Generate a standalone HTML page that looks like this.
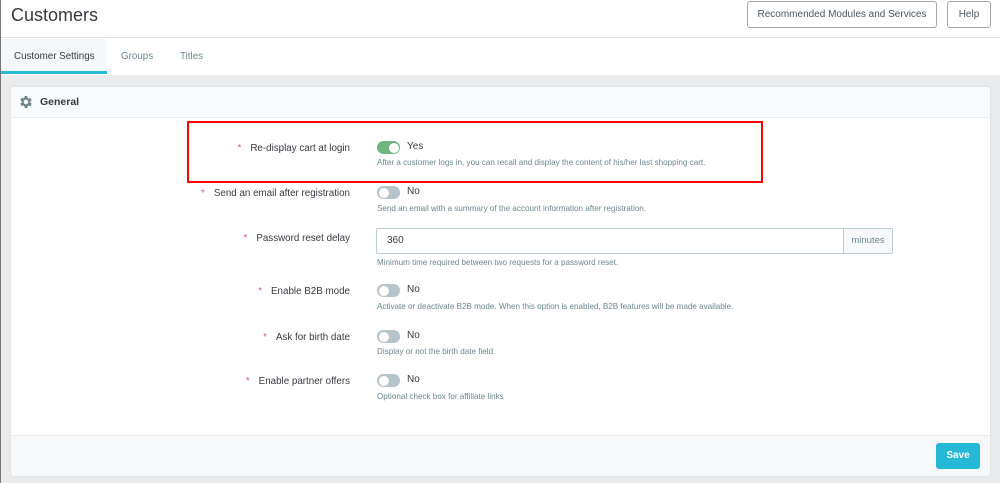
<!DOCTYPE html>
<html><head><meta charset="utf-8"><style>
*{box-sizing:border-box;margin:0;padding:0}
body{width:1000px;height:483px;overflow:hidden;background:#eaebec;font-family:"Liberation Sans",sans-serif;position:relative;color:#363a41}
.abs{position:absolute}
.hdr{left:0;top:0;width:1000px;height:38px;background:#fff;border-bottom:1px solid #dfe3e6}
.tabs{left:0;top:38px;width:1000px;height:37px;background:#fff}
.btn{border:1px solid #a0a8ae;border-radius:3px;background:#fff;color:#4a555e;font-size:10px;text-align:center;line-height:25px;height:27px}
.panel{left:11px;top:87px;width:979px;height:389px;background:#fff;border-radius:3px;box-shadow:0 0 2px rgba(0,0,0,.1)}
.ph{left:11px;top:87px;width:979px;height:31px;background:#fafbfc;border-bottom:1px solid #e6ebee;border-radius:3px 3px 0 0}
.pf{left:11px;top:435px;width:979px;height:41px;background:#f6f8fa;border-top:1px solid #e6ebee;border-radius:0 0 3px 3px}
.lbl{right:650px;font-size:9.8px;color:#363a41;text-align:right;white-space:nowrap}
.lbl b{color:#e15a5a;font-weight:normal;margin-right:9px}
.tg{left:377px;width:23px;height:13px;border-radius:7px;background:#b7c3ca}
.tg::after{content:"";position:absolute;top:1.5px;left:1.5px;width:10px;height:10px;border-radius:50%;background:#fff}
.tg.on{background:#70b580}
.tg.on::after{left:11.5px}
.val{left:407px;font-size:10px;color:#363a41}
.help{left:377px;font-size:8.1px;color:#6c868e;white-space:nowrap}
</style></head><body>
<div class="abs" style="left:0;top:0;width:1px;height:483px;background:#777;z-index:5"></div>
<div class="abs hdr"></div>
<div class="abs" style="left:11px;top:5px;font-size:18px;color:#363a41">Customers</div>
<div class="abs btn" style="left:747px;top:1px;width:190px">Recommended Modules and Services</div>
<div class="abs btn" style="left:947px;top:1px;width:44px">Help</div>
<div class="abs tabs"></div>
<div class="abs" style="left:1px;top:39px;width:106px;height:35px;background:#f4f8fb;border-bottom:3px solid #25b9d7"></div>
<div class="abs" style="left:14px;top:51px;font-size:9.8px;color:#363a41">Customer Settings</div>
<div class="abs" style="left:121px;top:51px;font-size:9.8px;color:#6c868e">Groups</div>
<div class="abs" style="left:180px;top:51px;font-size:9.8px;color:#6c868e">Titles</div>
<div class="abs panel"></div>
<div class="abs ph"></div>
<svg class="abs" style="left:18px;top:94px" width="16" height="16" viewBox="0 0 24 24"><path fill="#6c868e" fill-rule="evenodd" d="M19.4 13a7.5 7.5 0 000-2l2.1-1.6-2-3.5-2.5 1a7.6 7.6 0 00-1.7-1L15 3h-4l-.4 2.6a7.6 7.6 0 00-1.7 1l-2.5-1-2 3.5L6.6 11a7.5 7.5 0 000 2l-2.2 1.6 2 3.5 2.5-1c.5.4 1.1.7 1.7 1L11 21h4l.4-2.6c.6-.3 1.2-.6 1.7-1l2.5 1 2-3.5zM13 15.5a3.5 3.5 0 110-7 3.5 3.5 0 010 7z" transform="translate(-1 0)"/></svg>
<div class="abs" style="left:40px;top:96px;font-size:10.5px;font-weight:bold;color:#363a41">General</div>
<div class="abs" style="left:187px;top:121px;width:576px;height:62px;border:2px solid #f00;z-index:3"></div>

<div class="abs lbl" style="top:143px"><b>*</b>Re-display cart at login</div>
<div class="abs tg on" style="top:141px"></div><div class="abs val" style="top:141px">Yes</div>
<div class="abs help" style="top:158px">After a customer logs in, you can recall and display the content of his/her last shopping cart.</div>

<div class="abs lbl" style="top:188px"><b>*</b>Send an email after registration</div>
<div class="abs tg" style="top:186px"></div><div class="abs val" style="top:186px">No</div>
<div class="abs help" style="top:204px">Send an email with a summary of the account information after registration.</div>

<div class="abs lbl" style="top:233px"><b>*</b>Password reset delay</div>
<div class="abs" style="left:376px;top:228px;width:517px;height:26px;border:1px solid #bbcdd2;border-radius:2px;background:#fff"></div>
<div class="abs" style="left:843px;top:229px;width:49px;height:24px;border-left:1px solid #bbcdd2;background:#f8f9fa;font-size:9.5px;color:#6c868e;line-height:24px;text-align:center">minutes</div>
<div class="abs" style="left:387px;top:235px;font-size:10px">360</div>
<div class="abs help" style="top:258px">Minimum time required between two requests for a password reset.</div>

<div class="abs lbl" style="top:286px"><b>*</b>Enable B2B mode</div>
<div class="abs tg" style="top:284px"></div><div class="abs val" style="top:284px">No</div>
<div class="abs help" style="top:302px">Activate or deactivate B2B mode. When this option is enabled, B2B features will be made available.</div>

<div class="abs lbl" style="top:332px"><b>*</b>Ask for birth date</div>
<div class="abs tg" style="top:330px"></div><div class="abs val" style="top:330px">No</div>
<div class="abs help" style="top:347px">Display or not the birth date field.</div>

<div class="abs lbl" style="top:376px"><b>*</b>Enable partner offers</div>
<div class="abs tg" style="top:374px"></div><div class="abs val" style="top:374px">No</div>
<div class="abs help" style="top:392px">Optional check box for affiliate links</div>

<div class="abs pf"></div>
<div class="abs" style="left:936px;top:443px;width:44px;height:26px;background:#25b9d7;border-radius:3px;color:#fff;font-size:10px;font-weight:bold;text-align:center;line-height:26px">Save</div>
</body></html>
